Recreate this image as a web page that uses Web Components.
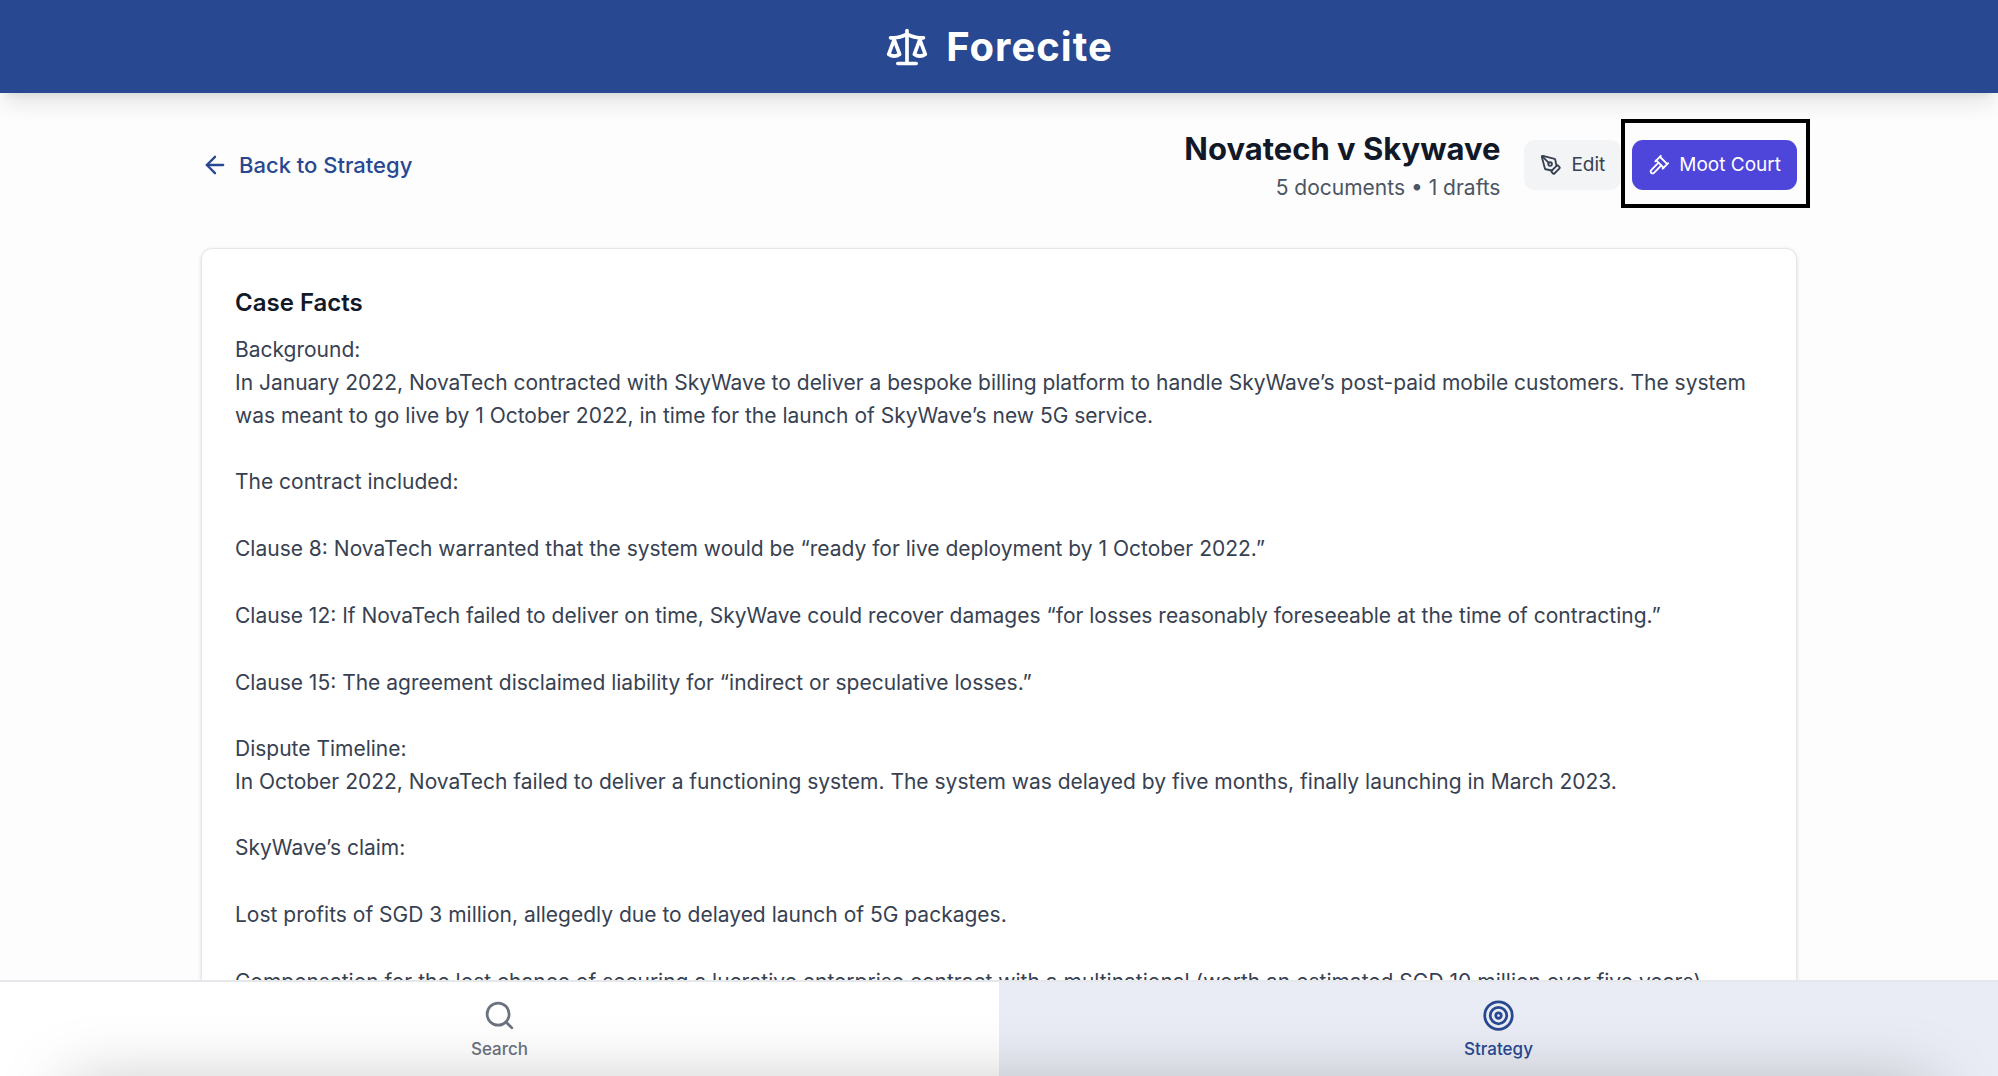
<!DOCTYPE html>
<html lang="en">
<head>
<meta charset="utf-8">
<title>Forecite</title>
<style>
  html, body { height: 100%; margin: 0; }
  body {
    background: #fdfdfd;
    color: #374151;
    font-family: Inter, "Liberation Sans", sans-serif;
    font-size: 21px;
    overflow: hidden;
  }
</style>
</head>
<body>
<forecite-app>
  <app-header slot="header">Forecite</app-header>
  <case-toolbar slot="main">
    <back-link slot="back">Back to Strategy</back-link>
    <case-title slot="title" meta="5 documents • 1 drafts">Novatech v Skywave</case-title>
    <action-button slot="actions" icon="pen">Edit</action-button>
    <action-button slot="actions" icon="gavel" variant="primary" highlighted>Moot Court</action-button>
  </case-toolbar>
  <case-card slot="main" heading="Case Facts">
    <fact-group>
      <p>Background:<br>In January 2022, NovaTech contracted with SkyWave to deliver a bespoke billing platform to handle SkyWave’s post-paid mobile customers. The system was meant to go live by 1 October 2022, in time for the launch of SkyWave’s new 5G service.</p>
    </fact-group>
    <fact-group>
      <p>The contract included:</p>
      <p>Clause 8: NovaTech warranted that the system would be “ready for live deployment by 1 October 2022.”</p>
      <p>Clause 12: If NovaTech failed to deliver on time, SkyWave could recover damages “for losses reasonably foreseeable at the time of contracting.”</p>
      <p>Clause 15: The agreement disclaimed liability for “indirect or speculative losses.”</p>
    </fact-group>
    <fact-group>
      <p>Dispute Timeline:<br>In October 2022, NovaTech failed to deliver a functioning system. The system was delayed by five months, finally launching in March 2023.</p>
    </fact-group>
    <fact-group>
      <p>SkyWave’s claim:</p>
      <p>Lost profits of SGD 3 million, allegedly due to delayed launch of 5G packages.</p>
      <p>Compensation for the lost chance of securing a lucrative enterprise contract with a multinational (worth an estimated SGD 10 million over five years).</p>
    </fact-group>
  </case-card>
  <tab-bar slot="footer">
    <tab-item icon="search">Search</tab-item>
    <tab-item icon="target" active>Strategy</tab-item>
  </tab-bar>
</forecite-app>

<script>
const ICONS = {
  scale: '<path d="m16 16 3-8 3 8c-.87.65-1.92 1-3 1s-2.13-.35-3-1Z"/><path d="m2 16 3-8 3 8c-.87.65-1.92 1-3 1s-2.13-.35-3-1Z"/><path d="M7 21h10"/><path d="M12 3v18"/><path d="M3 7h2c2 0 5-1 7-2 2 1 5 2 7 2h2"/>',
  back: '<path d="m12 19-7-7 7-7"/><path d="M19 12H5"/>',
  pen: '<path d="M15.707 21.293a1 1 0 0 1-1.414 0l-1.586-1.586a1 1 0 0 1 0-1.414l5.586-5.586a1 1 0 0 1 1.414 0l1.586 1.586a1 1 0 0 1 0 1.414z"/><path d="m18 13-1.375-6.874a1 1 0 0 0-.746-.776L3.235 2.028a1 1 0 0 0-1.207 1.207L5.35 15.879a1 1 0 0 0 .776.746L13 18"/><path d="m2.3 2.3 7.286 7.286"/><circle cx="11" cy="11" r="2"/>',
  gavel: '<path d="m14.5 12.5-8 8a2.119 2.119 0 1 1-3-3l8-8"/><path d="m16 16 6-6"/><path d="m8 8 6-6"/><path d="m9 7 8 8"/><path d="m21 11-8-8"/>',
  search: '<circle cx="11" cy="11" r="8"/><path d="m21 21-4.3-4.3"/>',
  target: '<circle cx="12" cy="12" r="10"/><circle cx="12" cy="12" r="6"/><circle cx="12" cy="12" r="2"/>'
};
const icon = (name, size) =>
  `<svg width="${size}" height="${size}" viewBox="0 0 24 24" fill="none" stroke="currentColor" stroke-width="2" stroke-linecap="round" stroke-linejoin="round" aria-hidden="true">${ICONS[name]}</svg>`;

function define(tag, render) {
  customElements.define(tag, class extends HTMLElement {
    constructor() {
      super();
      this.attachShadow({ mode: 'open' });
    }
    connectedCallback() {
      this.shadowRoot.innerHTML =
        '<style>*{box-sizing:border-box} :host{box-sizing:border-box} svg{display:block;flex:none}</style>' + render(this);
    }
  });
}

define('forecite-app', () => `
  <style>
    :host { display: flex; flex-direction: column; height: 100vh; overflow: hidden; }
    main { flex: 1; min-height: 0; overflow: hidden; padding: 33px 24px 0; }
    .column { max-width: 1596px; margin: 0 auto; }
  </style>
  <slot name="header"></slot>
  <main><div class="column"><slot name="main"></slot></div></main>
  <slot name="footer"></slot>`);

define('app-header', () => `
  <style>
    :host { display: block; position: relative; z-index: 1; background: #284891; color: #fff;
      box-shadow: 0 14px 21px -4px rgba(0,0,0,.1), 0 6px 8px -6px rgba(0,0,0,.1); }
    header { display: flex; align-items: center; justify-content: center; gap: 17px; height: 93px; }
    h1 { margin: 0; font-size: 40px; line-height: 50px; font-weight: 700; letter-spacing: 1px; }
  </style>
  <header>${icon('scale', 44)}<h1><slot></slot></h1></header>`);

define('case-toolbar', () => `
  <style>
    :host { display: flex; align-items: center; justify-content: space-between; margin-bottom: 44px; }
    .right { display: flex; align-items: center; gap: 24px; }
    .actions { display: flex; gap: 11px; }
  </style>
  <slot name="back"></slot>
  <div class="right"><slot name="title"></slot><div class="actions"><slot name="actions"></slot></div></div>`);

define('back-link', () => `
  <style>
    :host { display: block; }
    a { display: flex; align-items: center; gap: 10px; color: #284891; text-decoration: none; font-weight: 500; font-size: 22px; line-height: 32px; }
  </style>
  <a href="#strategy">${icon('back', 28)}<span><slot></slot></span></a>`);

define('case-title', el => `
  <style>
    :host { display: block; text-align: right; }
    h2 { margin: 0; color: #111827; font-size: 31px; line-height: 45px; font-weight: 700; }
    p { margin: 0; color: #4b5563; font-size: 21px; line-height: 33px; }
  </style>
  <h2><slot></slot></h2><p>${el.getAttribute('meta')}</p>`);

define('action-button', el => `
  <style>
    :host { display: block; position: relative; }
    button { display: flex; align-items: center; gap: 9px; height: 50px; padding: 0 16px; border: 0; border-radius: 11px;
      background: #f3f4f6; color: #374151; font: inherit; font-size: 19px; line-height: 28px; }
    :host([variant="primary"]) button { background: #4e45db; color: #fff; }
    :host([highlighted])::after { content: ""; position: absolute; inset: -21px -13px -18px -11px; border: 4px solid #000; pointer-events: none; }
  </style>
  <button type="button">${icon(el.getAttribute('icon'), 22)}<span><slot></slot></span></button>`);

define('case-card', el => `
  <style>
    :host { display: block; background: #fff; border: 1px solid #e5e7eb; border-radius: 11px; padding: 34px 33px 33px;
      box-shadow: 0 1px 4px rgba(0,0,0,.1), 0 1px 3px -1px rgba(0,0,0,.1); }
    h3 { margin: 0 0 11px; color: #111827; font-size: 24px; line-height: 39px; font-weight: 600; }
    .facts { display: flex; flex-direction: column; gap: 33px; }
  </style>
  <h3>${el.getAttribute('heading')}</h3><div class="facts"><slot></slot></div>`);

define('fact-group', () => `
  <style>
    :host { display: flex; flex-direction: column; gap: 34px; line-height: 33px; }
    ::slotted(p) { margin: 0; }
  </style>
  <slot></slot>`);

define('tab-bar', () => `
  <style>
    :host { display: block; position: relative; z-index: 2; flex: none; background: #fff; border-top: 2px solid #e5e7eb; }
    nav { display: grid; grid-template-columns: 1fr 1fr; }
    :host::after { content: ""; position: absolute; left: 68px; right: 68px; top: calc(100% + 12px); height: 60px;
      box-shadow: 0 0 70px rgba(0,0,0,.27); pointer-events: none; }
  </style>
  <nav><slot></slot></nav>`);

define('tab-item', el => `
  <style>
    :host { display: block; color: #6b7280; }
    :host([active]) { color: #284891; background: #e9ecf4; }
    a { display: flex; flex-direction: column; align-items: center; gap: 6px; padding: 17px 0 16px; color: inherit; text-decoration: none;
      font-size: 17px; line-height: 22px; font-weight: 500; }
  </style>
  <a href="#${el.getAttribute('icon')}">${icon(el.getAttribute('icon'), 33)}<span><slot></slot></span></a>`);
</script>
</body>
</html>
